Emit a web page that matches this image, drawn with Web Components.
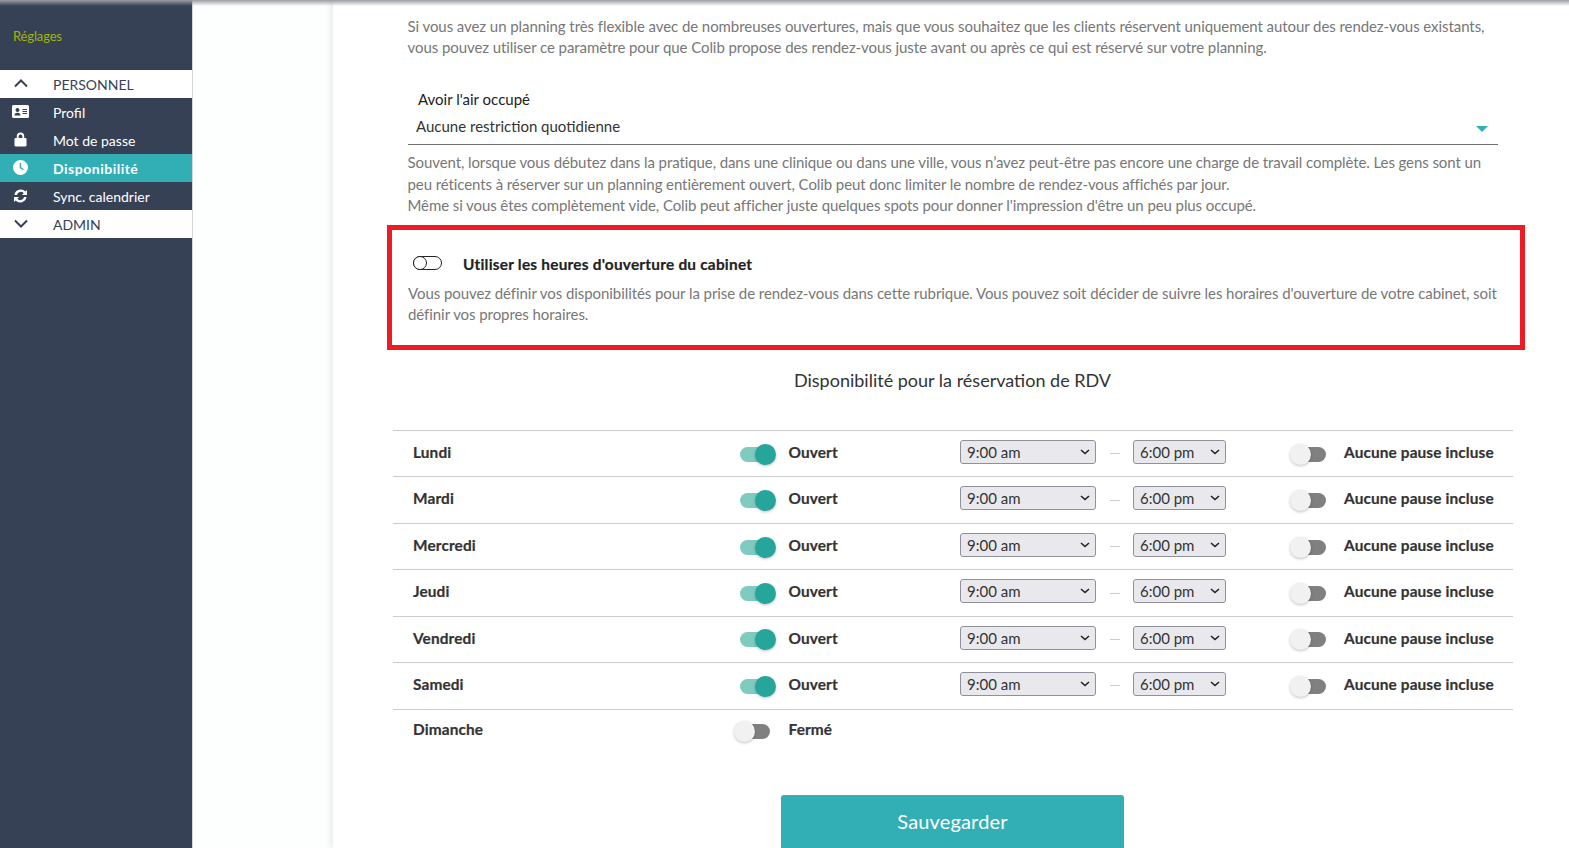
<!DOCTYPE html>
<html lang="fr">
<head>
<meta charset="utf-8">
<title>Disponibilité</title>
<style>
html, body { margin: 0; height: 848px; overflow: hidden; background: #fff; }
body { font-family: Lato, "Liberation Sans", sans-serif; font-size: 15px; color: #333; }
</style>
</head>
<body>
<template id="nav-item-tpl">
    <style>
        :host { display: flex; align-items: center; height: 28px; color: #fff; font-size: 14px; box-sizing: border-box; }
        :host([kind="section"]) { background: #fff; color: #364156; }
        :host([active]) { background: #32afb5; font-weight: 700; letter-spacing: .5px; }
        .icon { width: 53px; display: flex; justify-content: flex-start; padding-left: 14px; box-sizing: border-box; margin-top: -1px; }
    </style>
    <div class="icon"><slot name="icon"></slot></div>
    <slot></slot>
</template>

<template id="app-sidebar-tpl">
    <style>
        :host { display: block; width: 193px; height: 848px; flex: none; background: #364156; border-right: 1px solid #d5d5d5; box-sizing: border-box; }
        .title { height: 70px; box-sizing: border-box; padding: 27px 0 0 13px; color: #9fb50a; font-size: 13px; line-height: 18px; letter-spacing: -.15px; }
    </style>
    <div class="title"><slot name="title"></slot></div>
    <slot></slot>
</template>

<template id="app-switch-tpl">
    <style>
        :host { display: inline-block; position: relative; width: 30px; height: 24px; }
        .track { position: absolute; left: 0; right: 0; top: 5px; height: 15px; border-radius: 8px; background: #808080; }
        .thumb { position: absolute; left: -6px; top: 2px; width: 21px; height: 21px; border-radius: 50%; background: #f1f1f1; box-shadow: 0 1px 3px rgba(0,0,0,.25); }
        :host([on]) .track { background: #80cbc0; }
        :host([on]) .thumb { left: 15px; background: #26a69a; }
    </style>
    <div class="track"></div>
    <div class="thumb"></div>
</template>

<template id="time-select-tpl">
    <style>
        :host { display: flex; align-items: center; justify-content: space-between; height: 24px; box-sizing: border-box; background: #e9e9ed; border: 1px solid #8f8f9d; border-radius: 3px; padding: 0 5px 0 6px; color: #333; font-size: 15px; font-weight: 400; letter-spacing: 0; -webkit-text-stroke: 0; }
        svg { display: block; }
    </style>
    <slot></slot>
    <svg width="10" height="6" viewBox="0 0 10 6"><path d="M1 1l4 3.5L9 1" fill="none" stroke="#222" stroke-width="1.6"/></svg>
</template>

<template id="day-row-tpl">
    <style>
        :host { display: grid; grid-template-columns: 327px 48.5px 171.5px 136px 37px 93px 70px 48px 1fr; align-items: center; height: 46.45px; box-sizing: border-box; border-top: 1px solid #ccc; padding-left: 20px; font-weight: 700; font-size: 15.4px; letter-spacing: .12px; -webkit-text-stroke: .2px; color: #333; }
        .t { margin-top: -3.6px; }
        .dash { width: 10px; height: 1px; background: #ccc; margin-left: 14px; }
        time-select { margin-top: -3.6px; }
        :host(:not([open])) .t { margin-top: -7px; }
        :host(:not([open])) app-switch { margin-top: -2px; }
    </style>
    <div class="t" id="day"></div>
    <app-switch id="open"></app-switch>
    <div class="t" id="state"></div>
    <time-select id="from"></time-select>
    <div class="dash" id="dash"></div>
    <time-select id="to"></time-select>
    <div id="gap"></div>
    <app-switch id="pause"></app-switch>
    <div class="t" id="pauseText"></div>
</template>

<template id="cabinet-box-tpl">
    <style>
        :host { display: block; border: 5px solid #ed1c24; margin-left: 54px; width: 1138px; height: 125px; box-sizing: border-box; padding: 23px 20px 0 16px; }
        .head { display: flex; align-items: center; height: 22px; padding-left: 5px; font-weight: 700; color: #222; font-size: 15.4px; letter-spacing: .23px; -webkit-text-stroke: .2px; }
        .mini { width: 29px; height: 14px; border: 1px solid #222; border-radius: 8px; position: relative; margin-right: 21px; box-sizing: border-box; flex: none; margin-top: -3px; }
        .mini::before { content: ""; position: absolute; left: -1px; top: -1px; width: 14px; height: 14px; border: 1px solid #222; border-radius: 50%; background: #fff; box-sizing: border-box; }
        p { margin: 8px 0 0; color: #777; font-size: 15px; line-height: 21px; letter-spacing: -.07px; }
    </style>
    <div class="head"><span class="mini"></span><slot name="head"></slot></div>
    <p><slot></slot></p>
</template>

<template id="busy-select-tpl">
    <style>
        :host { display: block; margin: 28px 71px 0 74.5px; position: relative; border-bottom: 1px solid #707070; height: 58px; box-sizing: border-box; }
        .label { padding-left: 10.5px; color: #222; line-height: 24px; }
        .value { padding-left: 8.500px; color: #333; line-height: 24px; margin-top: 3px; }
        .arrow { position: absolute; right: 10px; top: 39px; width: 0; height: 0; border: 6px solid transparent; border-top: 6px solid #32afb5; border-bottom: 0; }
    </style>
    <div class="label"><slot name="label"></slot></div>
    <div class="value"><slot></slot></div>
    <div class="arrow"></div>
</template>

<template id="app-page-tpl">
    <style>
        :host { display: flex; height: 848px; overflow: hidden; position: relative; }
        .topshade { position: absolute; left: 0; right: 0; top: 0; height: 6px; background: linear-gradient(#9a9da3, rgba(154,157,163,0)); }
        .gutter { width: 140px; flex: none; background: #fdfefe; }
        main { flex: 1; min-width: 0; box-shadow: -3px 0 6px rgba(0,0,0,.08); background: #fff; font-size: 15px; }
    </style>
    <slot name="side"></slot>
    <div class="gutter"></div>
    <main><slot></slot></main>
    <div class="topshade"></div>
</template>

<template id="avail-content-tpl">
    <style>
        :host { display: block; height: 848px; overflow: hidden; }
        p { margin: 0; color: #777; line-height: 21.4px; padding-left: 74.5px; font-size: 15px; width: 1100px; letter-spacing: -.07px; }
        .intro { padding-top: 16px; }
        .hint { margin: 7.4px 0 8.6px; letter-spacing: -.09px; }
        h2 { margin: 18px 0 0; height: 62px; font-size: 18px; font-weight: 400; color: #333; line-height: 24px; text-align: center; width: 1239px; }
        .table { margin: 0 0 0 60px; width: 1120px; }
        button { display: block; width: 343px; height: 60px; margin: 40px 0 0 448px; border: 0; border-radius: 3px; background: #32afb5; color: #fff; font: 20px Lato, "Liberation Sans", sans-serif; letter-spacing: .15px; padding: 0 0 9px; }
    </style>
    <p class="intro">Si vous avez un planning très flexible avec de nombreuses ouvertures, mais que vous souhaitez que les clients réservent uniquement autour des rendez-vous existants,<br>vous pouvez utiliser ce paramètre pour que Colib propose des rendez-vous juste avant ou après ce qui est réservé sur votre planning.</p>
    <busy-select><span slot="label">Avoir l'air occupé</span>Aucune restriction quotidienne</busy-select>
    <p class="hint">Souvent, lorsque vous débutez dans la pratique, dans une clinique ou dans une ville, vous n’avez peut-être pas encore une charge de travail complète. Les gens sont un<br>peu réticents à réserver sur un planning entièrement ouvert, Colib peut donc limiter le nombre de rendez-vous affichés par jour.<br>Même si vous êtes complètement vide, Colib peut afficher juste quelques spots pour donner l'impression d'être un peu plus occupé.</p>
    <cabinet-box><span slot="head">Utiliser les heures d'ouverture du cabinet</span>Vous pouvez définir vos disponibilités pour la prise de rendez-vous dans cette rubrique. Vous pouvez soit décider de suivre les horaires d'ouverture de votre cabinet, soit définir vos propres horaires.</cabinet-box>
    <h2>Disponibilité pour la réservation de RDV</h2>
    <div class="table" id="rows"></div>
    <button>Sauvegarder</button>
</template>

<app-page>
    <app-sidebar slot="side">
        <span slot="title">Réglages</span>
        <nav-item kind="section"><svg slot="icon" width="14" height="9" viewBox="0 0 14 9"><path d="M1 7.500l6-6 6 6" fill="none" stroke="#364156" stroke-width="2"/></svg>PERSONNEL</nav-item>
        <nav-item><svg slot="icon" width="17" height="13" viewBox="0 0 17 13" style="margin-left:-2px"><path fill-rule="evenodd" fill="#fff" d="M1.5 0h14A1.5 1.5 0 0 1 17 1.500v10a1.500 1.500 0 0 1-1.500 1.500h-14A1.500 1.500 0 0 1 0 11.500v-10A1.500 1.500 0 0 1 1.500 0zM5.500 3a2 2 0 1 0 0 4 2 2 0 0 0 0-4zM2.500 10.500h6c0-2-1-2.800-3-2.800s-3 .8-3 2.800zM10.500 4v1h4.500V4zM10.500 6v1h4.500V6zM10.500 8v1h4.500V8z"/></svg>Profil</nav-item>
        <nav-item><svg slot="icon" width="13" height="15" viewBox="0 0 14 16"><path fill-rule="evenodd" fill="#fff" d="M3 6.500V4.500a4 4 0 0 1 8 0v2h1.200c.7 0 1.300.6 1.300 1.300v6.400c0 .7-.6 1.300-1.300 1.300H1.800c-.7 0-1.300-.6-1.300-1.300V7.800c0-.7.6-1.300 1.300-1.300zM5 6.500h4v-2a2 2 0 0 0-4 0z"/></svg>Mot de passe</nav-item>
        <nav-item active><svg slot="icon" width="15" height="15" viewBox="0 0 15 15" style="margin-left:-1px"><path fill-rule="evenodd" fill="#fff" d="M7.500 0a7.500 7.500 0 1 1 0 15 7.500 7.500 0 0 1 0-15zM6.700 3v5l3.400 2.200.7-1.100-2.700-1.800V3z"/></svg>Disponibilité</nav-item>
        <nav-item><svg slot="icon" width="13" height="14" viewBox="0 0 14 14"><path fill="#fff" d="M14 .5v5.500H8.500l2-2A4.300 4.300 0 0 0 3.100 5.800H.5A6.900 6.900 0 0 1 12.300 2.200zM0 13.500V8h5.500l-2 2a4.300 4.300 0 0 0 7.400-1.800h2.600A6.900 6.900 0 0 1 1.700 11.800z"/></svg>Sync. calendrier</nav-item>
        <nav-item kind="section"><svg slot="icon" width="14" height="9" viewBox="0 0 14 9"><path d="M1 1.500l6 6 6-6" fill="none" stroke="#364156" stroke-width="2"/></svg>ADMIN</nav-item>
    </app-sidebar>
    <avail-content></avail-content>
</app-page>

<script>
function tplRoot(el, id) {
    var root = el.attachShadow({mode: 'open'});
    root.appendChild(document.getElementById(id).content.cloneNode(true));
    return root;
}

class NavItem extends HTMLElement { constructor() { super(); tplRoot(this, 'nav-item-tpl'); } }
class AppSidebar extends HTMLElement { constructor() { super(); tplRoot(this, 'app-sidebar-tpl'); } }
class AppSwitch extends HTMLElement { constructor() { super(); tplRoot(this, 'app-switch-tpl'); } }
class TimeSelect extends HTMLElement { constructor() { super(); tplRoot(this, 'time-select-tpl'); } }
class CabinetBox extends HTMLElement { constructor() { super(); tplRoot(this, 'cabinet-box-tpl'); } }
class BusySelect extends HTMLElement { constructor() { super(); tplRoot(this, 'busy-select-tpl'); } }
class AppPage extends HTMLElement { constructor() { super(); tplRoot(this, 'app-page-tpl'); } }

class DayRow extends HTMLElement {
    constructor() {
        super();
        tplRoot(this, 'day-row-tpl');
    }
    connectedCallback() {
        var r = this.shadowRoot;
        var open = this.hasAttribute('open');
        r.getElementById('day').textContent = this.getAttribute('day');
        r.getElementById('state').textContent = open ? 'Ouvert' : 'Fermé';
        if (open) {
            r.getElementById('open').setAttribute('on', '');
            r.getElementById('from').textContent = '9:00 am';
            r.getElementById('to').textContent = '6:00 pm';
            r.getElementById('pauseText').textContent = 'Aucune pause incluse';
        } else {
            ['from', 'dash', 'to', 'gap', 'pause', 'pauseText'].forEach(function (id) {
                r.getElementById(id).remove();
            });
        }
    }
}

class AvailContent extends HTMLElement {
    constructor() {
        super();
        var root = tplRoot(this, 'avail-content-tpl');
        var rows = root.getElementById('rows');
        ['Lundi', 'Mardi', 'Mercredi', 'Jeudi', 'Vendredi', 'Samedi', 'Dimanche'].forEach(function (d) {
            var row = document.createElement('day-row');
            row.setAttribute('day', d);
            if (d !== 'Dimanche') row.setAttribute('open', '');
            rows.appendChild(row);
        });
    }
}

customElements.define('nav-item', NavItem);
customElements.define('app-sidebar', AppSidebar);
customElements.define('app-switch', AppSwitch);
customElements.define('time-select', TimeSelect);
customElements.define('day-row', DayRow);
customElements.define('cabinet-box', CabinetBox);
customElements.define('busy-select', BusySelect);
customElements.define('avail-content', AvailContent);
customElements.define('app-page', AppPage);
</script>
</body>
</html>
